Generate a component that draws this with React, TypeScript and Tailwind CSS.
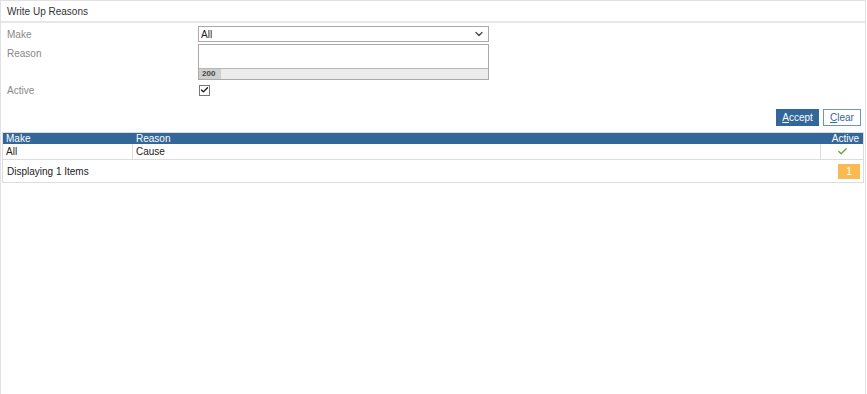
import { ChevronDown, Check } from 'lucide-react'

const rows = [{ make: 'All', reason: 'Cause', active: true }]

export default function App() {
  return (
    <div className="h-[394px] overflow-hidden bg-white font-['Liberation_Sans',Arial,sans-serif] text-[10px] text-[#333]">
      <div className="mr-[1px] min-h-[420px] border border-[#e1e1e1] bg-white">
        <div className="flex h-[22px] items-center border-b-2 border-[#e6e6e6] px-[6px] text-[10px] text-[#333]">
          Write Up Reasons
        </div>

        <div className="px-[6px] pt-[3px]">
          <div className="flex h-[16px] items-center">
            <label className="w-[191px] text-[#888]">Make</label>
            <div className="flex h-[16px] w-[291px] items-center justify-between border border-[#a9a9a9] pl-[2px] pr-[3px] text-[#222]">
              <span>All</span>
              <ChevronDown size={12} strokeWidth={2.5} className="text-[#444]" />
            </div>
          </div>

          <div className="mt-[2px] flex">
            <label className="w-[191px] pt-[2px] text-[#888]">Reason</label>
            <div className="flex h-[36px] w-[291px] flex-col border border-[#a9a9a9]">
              <div className="flex-1" />
              <div className="flex h-[11px] border-t border-[#b5b5b5] bg-[#ececec]">
                <span className="flex w-[22px] items-center bg-[#cfcfcf] pl-[3px] text-[8px] font-bold text-[#444]">200</span>
              </div>
            </div>
          </div>

          <div className="mt-[4px] flex h-[12px] items-center">
            <label className="w-[192px] text-[#888]">Active</label>
            <span className="flex h-[11px] w-[11px] items-center justify-center border border-[#777] bg-white">
              <Check size={10} strokeWidth={3.5} className="text-[#111]" />
            </span>
          </div>
        </div>

        <div className="mt-[13px] flex justify-end gap-[4px] pr-[4px]">
          <button className="h-[17px] w-[43px] bg-[#336699] text-[10px] text-white">
            <span className="underline">A</span>ccept
          </button>
          <button className="h-[17px] w-[38px] border border-[#6d95c0] bg-white text-[10px] text-[#336699]">
            <span className="underline">C</span>lear
          </button>
        </div>

        <div className="mx-[1px] mt-[6px] border border-[#dcdcdc]">
          <div className="flex h-[11px] items-center bg-[#336699] text-white">
            <div className="w-[130px] pl-[3px]">Make</div>
            <div className="flex-1 pl-[3px]">Reason</div>
            <div className="w-[43px] pr-[4px] text-right">Active</div>
          </div>
          {rows.map((r, i) => (
            <div key={i} className="flex h-[16px] items-center border-b border-[#dcdcdc] text-[#222]">
              <div className="flex h-full w-[130px] items-center border-r border-[#dcdcdc] pl-[3px]">{r.make}</div>
              <div className="flex h-full flex-1 items-center pl-[3px]">{r.reason}</div>
              <div className="flex h-full w-[43px] items-center justify-center border-l border-[#dcdcdc]">
                {r.active && <Check size={11} strokeWidth={3} className="text-[#6aa83a]" />}
              </div>
            </div>
          ))}
          <div className="flex h-[22px] items-center justify-between pl-[4px] pr-[3px] text-[#222]">
            <span>Displaying 1 Items</span>
            <span className="flex h-[15px] w-[22px] items-center justify-center bg-[#f8bb52] text-white">1</span>
          </div>
        </div>
      </div>
    </div>
  )
}
